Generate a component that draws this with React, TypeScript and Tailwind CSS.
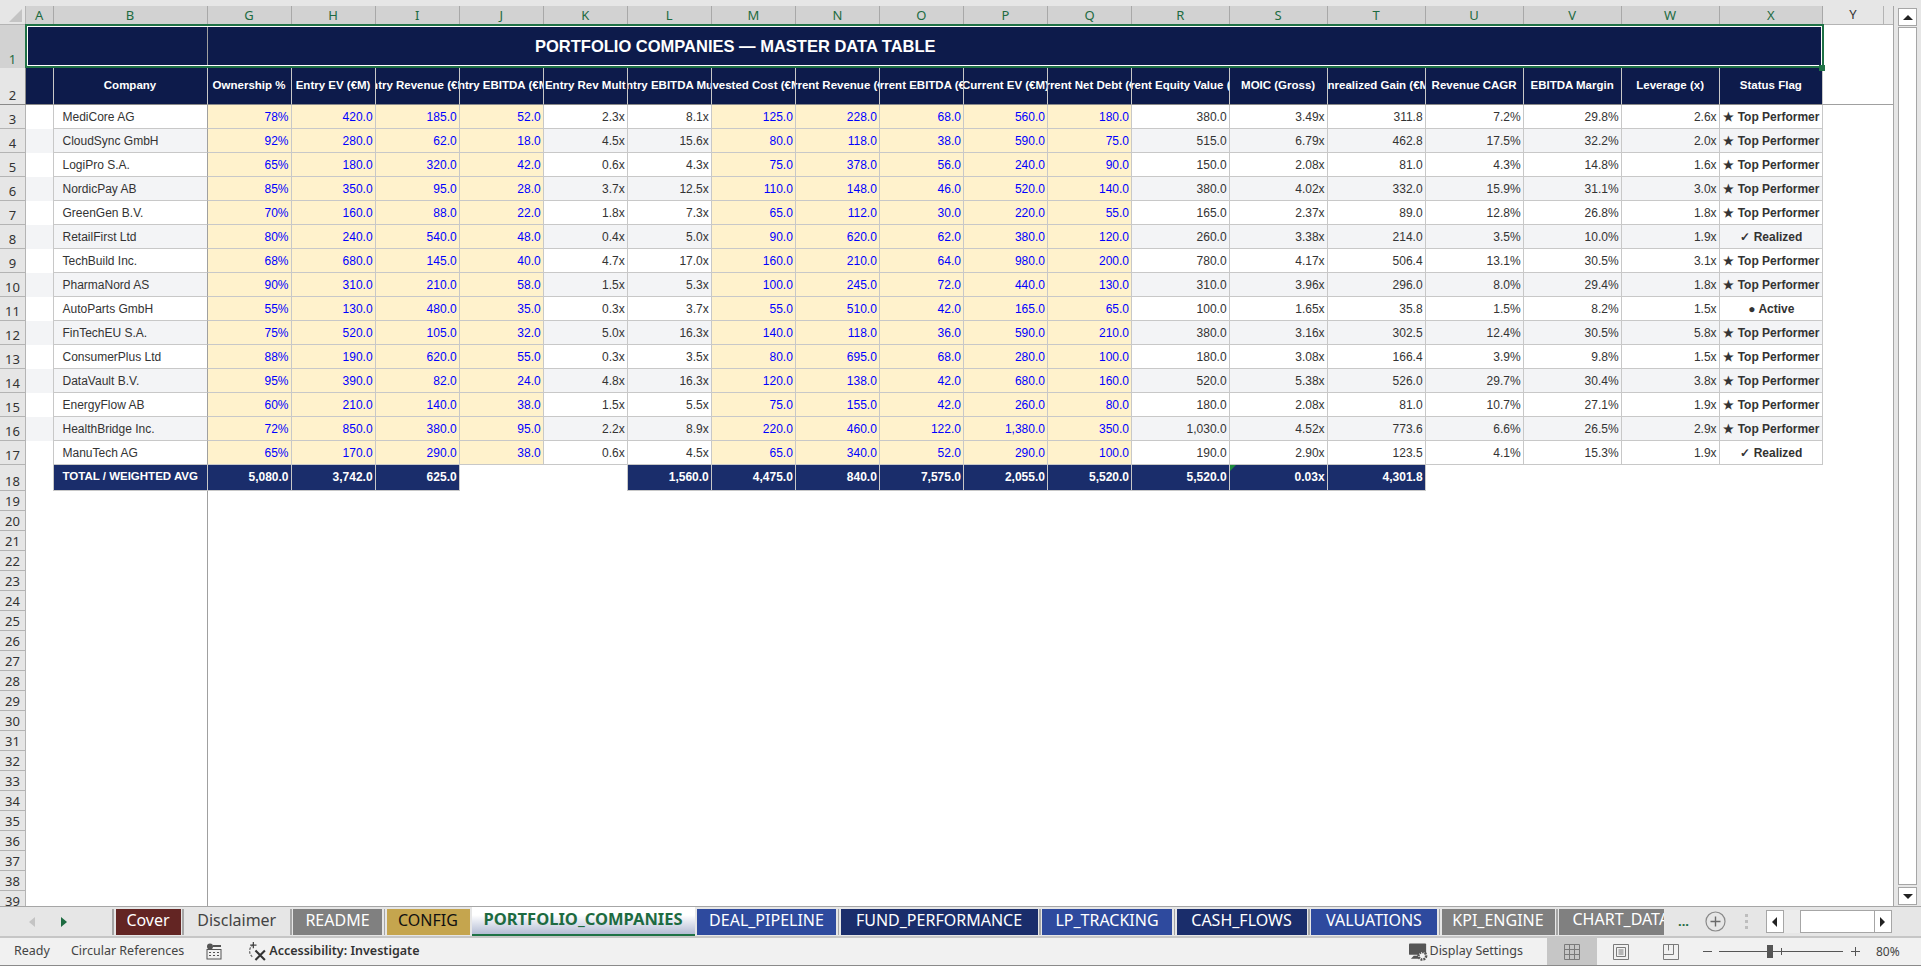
import React from "react";

const COLS = ["A","B","G","H","I","J","K","L","M","N","O","P","Q","R","S","T","U","V","W","X"];
const HEAD = ["Company","Ownership %","Entry EV (€M)","Entry Revenue (€M)","Entry EBITDA (€M)","Entry Rev Mult","Entry EBITDA Mult","Invested Cost (€M)","Current Revenue (€M)","Current EBITDA (€M)","Current EV (€M)","Current Net Debt (€M)","Current Equity Value (€M)","MOIC (Gross)","Unrealized Gain (€M)","Revenue CAGR","EBITDA Margin","Leverage (x)","Status Flag"];
const T = "★ Top Performer";
const R = "✓ Realized";
const DATA: string[][] = [
["MediCore AG","78%","420.0","185.0","52.0","2.3x","8.1x","125.0","228.0","68.0","560.0","180.0","380.0","3.49x","311.8","7.2%","29.8%","2.6x",T],
["CloudSync GmbH","92%","280.0","62.0","18.0","4.5x","15.6x","80.0","118.0","38.0","590.0","75.0","515.0","6.79x","462.8","17.5%","32.2%","2.0x",T],
["LogiPro S.A.","65%","180.0","320.0","42.0","0.6x","4.3x","75.0","378.0","56.0","240.0","90.0","150.0","2.08x","81.0","4.3%","14.8%","1.6x",T],
["NordicPay AB","85%","350.0","95.0","28.0","3.7x","12.5x","110.0","148.0","46.0","520.0","140.0","380.0","4.02x","332.0","15.9%","31.1%","3.0x",T],
["GreenGen B.V.","70%","160.0","88.0","22.0","1.8x","7.3x","65.0","112.0","30.0","220.0","55.0","165.0","2.37x","89.0","12.8%","26.8%","1.8x",T],
["RetailFirst Ltd","80%","240.0","540.0","48.0","0.4x","5.0x","90.0","620.0","62.0","380.0","120.0","260.0","3.38x","214.0","3.5%","10.0%","1.9x",R],
["TechBuild Inc.","68%","680.0","145.0","40.0","4.7x","17.0x","160.0","210.0","64.0","980.0","200.0","780.0","4.17x","506.4","13.1%","30.5%","3.1x",T],
["PharmaNord AS","90%","310.0","210.0","58.0","1.5x","5.3x","100.0","245.0","72.0","440.0","130.0","310.0","3.96x","296.0","8.0%","29.4%","1.8x",T],
["AutoParts GmbH","55%","130.0","480.0","35.0","0.3x","3.7x","55.0","510.0","42.0","165.0","65.0","100.0","1.65x","35.8","1.5%","8.2%","1.5x","● Active"],
["FinTechEU S.A.","75%","520.0","105.0","32.0","5.0x","16.3x","140.0","118.0","36.0","590.0","210.0","380.0","3.16x","302.5","12.4%","30.5%","5.8x",T],
["ConsumerPlus Ltd","88%","190.0","620.0","55.0","0.3x","3.5x","80.0","695.0","68.0","280.0","100.0","180.0","3.08x","166.4","3.9%","9.8%","1.5x",T],
["DataVault B.V.","95%","390.0","82.0","24.0","4.8x","16.3x","120.0","138.0","42.0","680.0","160.0","520.0","5.38x","526.0","29.7%","30.4%","3.8x",T],
["EnergyFlow AB","60%","210.0","140.0","38.0","1.5x","5.5x","75.0","155.0","42.0","260.0","80.0","180.0","2.08x","81.0","10.7%","27.1%","1.9x",T],
["HealthBridge Inc.","72%","850.0","380.0","95.0","2.2x","8.9x","220.0","460.0","122.0","1,380.0","350.0","1,030.0","4.52x","773.6","6.6%","26.5%","2.9x",T],
["ManuTech AG","65%","170.0","290.0","38.0","0.6x","4.5x","65.0","340.0","52.0","290.0","100.0","190.0","2.90x","123.5","4.1%","15.3%","1.9x",R],
];
const INPUT = new Set([1,2,3,4,7,8,9,10,11]);
const TOTAL_A = ["5,080.0","3,742.0","625.0"];
const TOTAL_B = ["1,560.0","4,475.0","840.0","7,575.0","2,055.0","5,520.0","5,520.0","0.03x","4,301.8"];

type Tab = { n: string; w: string; c: string };
const TABS: Tab[] = [
  { n: "Cover", w: "w-[65px]", c: "bg-[#632523] text-white" },
  { n: "Disclaimer", w: "w-[103.5px]", c: "bg-[#e6e6e6] text-[#444444]" },
  { n: "README", w: "w-[89px]", c: "bg-[#808080] text-white" },
  { n: "CONFIG", w: "w-[83px]", c: "bg-[#c5a54e] text-[#111111]" },
  { n: "DEAL_PIPELINE", w: "w-[139px]", c: "bg-[#2e4a9e] text-white" },
  { n: "FUND_PERFORMANCE", w: "w-[197px]", c: "bg-[#1a2d6b] text-white" },
  { n: "LP_TRACKING", w: "w-[130px]", c: "bg-[#2e4a9e] text-white" },
  { n: "CASH_FLOWS", w: "w-[130px]", c: "bg-[#1a2d6b] text-white" },
  { n: "VALUATIONS", w: "w-[126px]", c: "bg-[#2e4a9e] text-white" },
  { n: "KPI_ENGINE", w: "w-[113px]", c: "bg-[#808080] text-white" },
];

function RowHead({ n }: { n: number }) {
  return (
    <div className="col-start-1 flex items-end justify-center border-r border-b border-[#b4b4b4] bg-[#e6e6e6] pb-[1px] font-['Noto_Sans',sans-serif] text-[13px] leading-[15px] text-[#333333]">
      {n}
    </div>
  );
}

function TabBtn({ t, sep = true }: { t: Tab; sep?: boolean }) {
  return (
    <>
      <div className={"flex h-[26px] shrink-0 items-center justify-center pb-[5px] whitespace-nowrap " + t.w + " " + t.c}>{t.n}</div>
      {sep && <div className="mx-[1.5px] h-[26px] w-[1.5px] shrink-0 bg-[#a6a6a6]" />}
    </>
  );
}

export default function App() {
  return (
    <div className="flex h-[966px] w-[1921px] flex-col overflow-hidden bg-[#e6e6e6] font-['Noto_Sans',sans-serif]">
      <div className="h-[6px] shrink-0 bg-[#e6e6e6]" />
      <div className="flex h-[900px] shrink-0">
        <div className="relative h-[900px] w-[1893.6px] shrink-0 overflow-hidden border-r border-[#a6a6a6] bg-white font-['Liberation_Sans',sans-serif]">
          <div className="grid grid-cols-[26px_27.5px_154px_repeat(11,84.05px)_97.6px_repeat(5,98px)_103.5px_60.5px_10px] grid-rows-[19px_43px_36.5px_repeat(15,24px)_26px_repeat(21,20px)]">
            {/* column headers */}
            <div className="relative flex items-end justify-end border-r border-b border-[#b4b4b4] bg-[#e6e6e6]">
              <div className="mr-[3px] mb-[2px] h-0 w-0 border-b-[13px] border-l-[13px] border-b-[#c4c4c4] border-l-transparent" />
            </div>
            {COLS.map((c) => (
              <div key={c} className="flex items-center justify-center border-r border-[#a8a8a8] bg-[#d2d2d2] font-['Noto_Sans',sans-serif] text-[13px] text-[#1d6b41]">{c}</div>
            ))}
            <div className="flex items-center justify-center border-r border-b border-[#b4b4b4] bg-[#e6e6e6] font-['Noto_Sans',sans-serif] text-[13px] text-[#333333]">Y</div>
            <div className="border-b border-[#b4b4b4] bg-[#e6e6e6]" />

            {/* row 1 */}
            <div className="col-start-1 flex items-end justify-center border-r border-[#a8a8a8] bg-[#d2d2d2] pb-[1px] font-['Noto_Sans',sans-serif] text-[13px] leading-[15px] text-[#1d6b41]">1</div>
            <div className="col-span-2 border-r border-[#a0a0a0] bg-[#0d1b4b]" />
            <div className="col-span-18 flex items-center bg-[#0d1b4b] pl-[327.5px] text-[16.5px] font-bold whitespace-nowrap text-white">PORTFOLIO COMPANIES — MASTER DATA TABLE</div>
            <div className="col-span-2" />

            {/* row 2 */}
            <div className="col-start-1 flex items-end justify-center border-r border-b border-[#8a8a8a] bg-[#e6e6e6] pb-[1px] font-['Noto_Sans',sans-serif] text-[13px] leading-[15px] text-[#333333]">2</div>
            <div className="border-r border-b border-[#c8c8c8] border-b-[#8a8a8a] bg-[#0d1b4b]" />
            {HEAD.map((h) => (
              <div key={h} className="flex items-center justify-center overflow-hidden border-r border-b border-[#c8c8c8] border-b-[#8a8a8a] bg-[#0d1b4b] text-[11.5px] font-bold whitespace-nowrap text-white">
                <span className="shrink-0">{h}</span>
              </div>
            ))}
            <div className="col-span-2 border-b border-[#a0a0a0]" />

            {/* data rows */}
            {DATA.map((row, r) => {
              const stripe = r % 2 === 1;
              return (
                <React.Fragment key={row[0]}>
                  <RowHead n={r + 3} />
                  <div className={"border-r border-[#c8c8c8] " + (stripe ? "bg-[#f3f4f6]" : "bg-white")} />
                  {row.map((v, i) => {
                    const input = INPUT.has(i);
                    const bg = input ? "bg-[#fff2cc]" : stripe ? "bg-[#f3f4f6]" : "bg-white";
                    if (i === 0)
                      return <div key={i} className={"flex items-center overflow-hidden border-r border-b border-r-[#a0a0a0] border-b-[#c8c8c8] pt-[1px] pl-[9px] text-[12px] whitespace-nowrap text-[#333333] " + bg}>{v}</div>;
                    if (i === 18)
                      return <div key={i} className={"flex items-center justify-center overflow-hidden border-r border-b border-[#c8c8c8] pt-[1px] pl-[1px] text-[12px] font-bold whitespace-nowrap text-[#333333] " + bg}>{v}</div>;
                    return <div key={i} className={"flex items-center justify-end overflow-hidden border-r border-b border-[#c8c8c8] pt-[1px] pr-[2px] text-[12px] whitespace-nowrap " + bg + " " + (input ? "text-[#0000ff]" : "text-[#333333]")}>{v}</div>;
                  })}
                </React.Fragment>
              );
            })}

            {/* total row */}
            <RowHead n={18} />
            <div className="border-r border-[#c8c8c8]" />
            <div className="flex items-center border-r border-b border-[#c8c8c8] bg-[#1a2d6b] pl-[9px] text-[11.5px] font-bold whitespace-nowrap text-white">TOTAL / WEIGHTED AVG</div>
            {TOTAL_A.map((v) => (
              <div key={v} className="flex items-center justify-end border-r border-b border-[#c8c8c8] bg-[#1a2d6b] pr-[2px] text-[12px] font-bold text-white">{v}</div>
            ))}
            <div className="col-span-2 border-r border-[#c8c8c8]" />
            {TOTAL_B.map((v, i) => (
              <div key={i} className="relative flex items-center justify-end border-r border-b border-[#c8c8c8] bg-[#1a2d6b] pr-[2px] text-[12px] font-bold text-white">
                {v === "0.03x" && <div className="absolute top-0 left-0 h-0 w-0 border-t-[6px] border-r-[6px] border-t-[#1e8a3c] border-r-transparent" />}
                {v}
              </div>
            ))}

            {/* empty rows */}
            {Array.from({ length: 21 }, (_, i) => (
              <React.Fragment key={i}>
                <RowHead n={19 + i} />
                <div className="col-span-2 border-r border-[#a0a0a0]" />
              </React.Fragment>
            ))}
          </div>

          {/* selection */}
          <div className="pointer-events-none absolute top-[18px] left-[24.5px] h-[44px] w-[1799px] border-2 border-[#1f7246] shadow-[inset_0_0_0_1px_#ffffff]" />
          <div className="pointer-events-none absolute top-[58.5px] left-[1819px] h-[6px] w-[6px] bg-[#1f7246]" />
        </div>

        {/* vertical scroll bar */}
        <div className="flex w-[27.4px] shrink-0 flex-col items-center pt-[2px] pl-[1px]">
          <div className="flex h-[18px] w-[19px] items-center justify-center border border-[#a6a6a6] bg-white">
            <div className="h-0 w-0 border-x-[5px] border-b-[5px] border-x-transparent border-b-[#222222]" />
          </div>
          <div className="mt-[1px] w-[19px] flex-1 border border-[#a6a6a6] bg-white" />
          <div className="mt-[2px] flex h-[18px] w-[19px] items-center justify-center border border-[#a6a6a6] bg-white">
            <div className="h-0 w-0 border-x-[5px] border-t-[5px] border-x-transparent border-t-[#222222]" />
          </div>
          <div className="h-[1px]" />
        </div>
      </div>

      {/* tabs */}
      <div className="flex h-[32px] shrink-0 border-t border-[#a6a6a6] border-b-2 border-b-[#c6c6c6] text-[16px]">
        <div className="flex h-[30px] w-[112px] shrink-0 items-center pl-[29px]">
          <div className="h-0 w-0 border-y-[5px] border-r-[6px] border-y-transparent border-r-[#c4c4c4]" />
          <div className="ml-[26px] h-0 w-0 border-y-[5px] border-l-[6px] border-y-transparent border-l-[#1d6b41]" />
        </div>
        <div className="flex h-[29px] items-start pt-[2px]">
          <div className="mr-[2px] h-[26px] w-[1.5px] shrink-0 bg-[#a6a6a6]" />
          <TabBtn t={TABS[0]} />
          <TabBtn t={TABS[1]} />
          <TabBtn t={TABS[2]} />
          <TabBtn t={TABS[3]} sep={false} />
          <div className="w-[2px] shrink-0" />
          <div className="-mt-[2px] flex h-[29px] w-[223px] shrink-0 items-center justify-center border-b-2 border-[#1f7246] bg-gradient-to-b from-white from-30% to-[#b4bcd4] pb-[3px] text-[16.5px] font-bold whitespace-nowrap text-[#1d6b41]">PORTFOLIO_COMPANIES</div>
          <div className="w-[2.5px] shrink-0" />
          <TabBtn t={TABS[4]} />
          <TabBtn t={TABS[5]} />
          <TabBtn t={TABS[6]} />
          <TabBtn t={TABS[7]} />
          <TabBtn t={TABS[8]} />
          <TabBtn t={TABS[9]} />
          <div className="h-[26px] w-[105px] shrink-0 overflow-hidden bg-[#808080] pl-[13.5px] leading-[21px] whitespace-nowrap text-white">CHART_DATA</div>
        </div>
        <div className="flex h-[29px] flex-1 items-center">
          <span className="ml-[14px] text-[13px] font-bold text-[#1d6b41]">...</span>
          <svg className="ml-[16px] h-[21px] w-[21px]" viewBox="0 0 21 21"><circle cx="10.5" cy="10.5" r="9.5" fill="none" stroke="#8a8a8a" strokeWidth="1.2" /><path d="M10.5 5.5v10M5.5 10.5h10" stroke="#6a6a6a" strokeWidth="1.4" /></svg>
          <div className="ml-[19px] flex flex-col gap-[3px]">
            <div className="h-[3px] w-[3px] bg-[#bdbdbd]" />
            <div className="h-[3px] w-[3px] bg-[#bdbdbd]" />
            <div className="h-[3px] w-[3px] bg-[#bdbdbd]" />
          </div>
          <div className="ml-[18px] flex h-[23px] items-stretch">
            <div className="flex w-[18px] items-center justify-center border border-[#a6a6a6] bg-white"><div className="h-0 w-0 border-y-[5px] border-r-[5px] border-y-transparent border-r-[#222222]" /></div>
            <div className="w-[16px] bg-[#ececec]" />
            <div className="w-[74px] border-y border-l border-[#a6a6a6] bg-white" />
            <div className="flex w-[18px] items-center justify-center border border-[#a6a6a6] bg-white"><div className="h-0 w-0 border-y-[5px] border-l-[5px] border-y-transparent border-l-[#222222]" /></div>
          </div>
        </div>
      </div>

      {/* status bar */}
      <div className="flex h-[28px] flex-1 items-stretch border-b border-[#8a8a8a] bg-[#f1f1f1] text-[12.5px] text-[#444444]">
        <span className="ml-[14px] self-center">Ready</span>
        <span className="ml-[21px] self-center">Circular References</span>
        <svg className="ml-[22px] h-[17px] w-[16px] self-center" viewBox="0 0 16 17"><circle cx="4" cy="3.5" r="3" fill="#555555" /><path d="M7 2h8v2H7z" fill="#555555" /><rect x="1" y="6.5" width="14" height="9.5" fill="none" stroke="#555555" /><path d="M3 9h2v1H3zm4 0h2v1H7zm4 0h2v1h-2zM3 12h2v1H3zm4 0h2v1H7zm4 0h2v1h-2z" fill="#555555" /></svg>
        <svg className="ml-[24px] h-[21px] w-[21px] self-center" viewBox="0 0 20 20" fill="none"><path d="M7 3.5A7 7 0 0 0 6 15" stroke="#666666" strokeWidth="1.2" strokeDasharray="2.5 1.2" /><path d="M7 1v6M4 4h6" stroke="#444444" strokeWidth="1.2" /><path d="M9 9l9 9M18 9l-9 9" stroke="#333333" strokeWidth="2" /></svg>
        <span className="ml-[2px] self-center font-semibold text-[#333333]">Accessibility: Investigate</span>
        <div className="flex-1" />
        <svg className="h-[20px] w-[20px] self-center" viewBox="0 0 21 20"><rect x="0" y="1" width="18" height="12" rx="1" fill="#555555" /><path d="M5 14h5v3H2z" fill="#555555" /><circle cx="14" cy="14" r="4" fill="#f1f1f1" stroke="#555555" strokeWidth="2.6" strokeDasharray="2 1" /></svg>
        <span className="ml-[1px] w-[92px] self-center whitespace-nowrap">Display Settings</span>
        <div className="ml-[25px] flex w-[50px] items-center justify-center bg-[#c6c6c6]">
          <svg className="h-[16px] w-[16px]" viewBox="0 0 16 16" fill="none" stroke="#7a7a7a"><path d="M.5.5h15v15H.5zM5.5.5v15M10.5.5v15M.5 5.5h15M.5 10.5h15" /></svg>
        </div>
        <div className="ml-[16.5px] flex w-[16px] items-center justify-center">
          <svg className="h-[16px] w-[16px]" viewBox="0 0 16 16" fill="none" stroke="#7a7a7a"><path d="M.5.5h15v15H.5zM3.5 3.5h9v9h-9zM5.5 6h5M5.5 8h5M5.5 10h5" /></svg>
        </div>
        <div className="ml-[34px] flex w-[16px] items-center justify-center">
          <svg className="h-[16px] w-[16px]" viewBox="0 0 16 16" fill="none" stroke="#7a7a7a"><path d="M.5.5h15v15H.5zM.5 10.5H10.5V.5M5.5.5v6" /></svg>
        </div>
        <div className="ml-[24px] h-[1px] w-[9px] self-center bg-[#555555]" />
        <div className="relative ml-[7px] h-[1px] w-[124px] self-center bg-[#555555]">
          <div className="absolute top-[-6px] left-[47.5px] h-[13px] w-[6px] bg-[#555555]" />
          <div className="absolute top-[-3px] left-[62px] h-[7px] w-[1px] bg-[#555555]" />
        </div>
        <div className="relative ml-[7.5px] h-[1px] w-[9px] self-center bg-[#555555]">
          <div className="absolute top-[-4px] left-[4px] h-[9px] w-[1px] bg-[#555555]" />
        </div>
        <span className="mr-[21px] ml-[16.5px] w-[24px] self-center text-[12px]">80%</span>
      </div>
    </div>
  );
}
